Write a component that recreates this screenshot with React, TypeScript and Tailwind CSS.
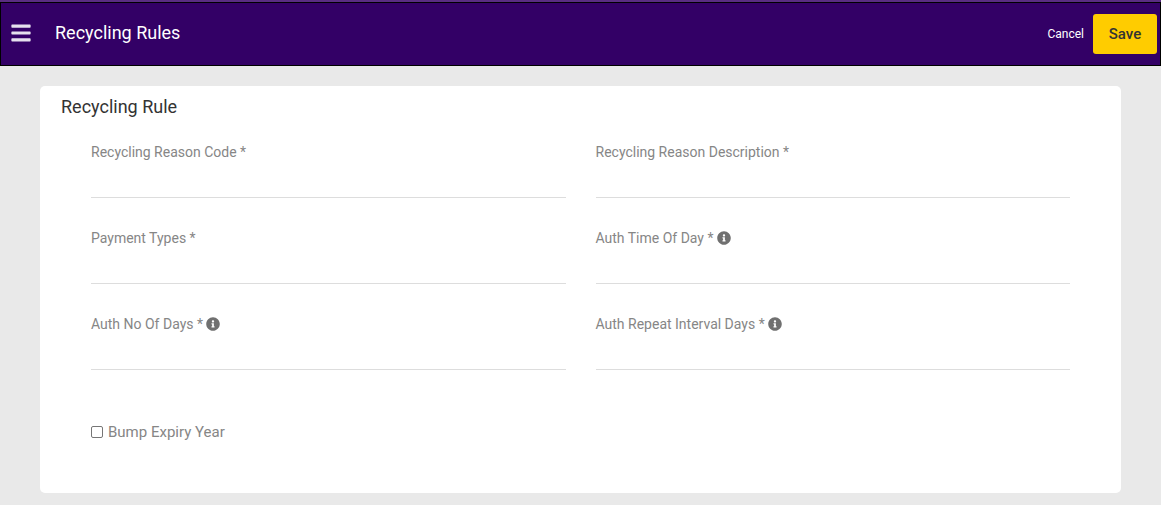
import { FaBars, FaInfoCircle } from "react-icons/fa";

const FIELDS = [
  { label: "Recycling Reason Code *", info: false },
  { label: "Recycling Reason Description *", info: false },
  { label: "Payment Types *", info: false },
  { label: "Auth Time Of Day *", info: true },
  { label: "Auth No Of Days *", info: true },
  { label: "Auth Repeat Interval Days *", info: true },
];

export default function App() {
  return (
    <div className="h-[505px] overflow-hidden bg-[#e9e9e9] font-['Roboto',sans-serif]">
      <div className="h-[2px] bg-[#5a2d82]" />
      <header className="flex h-[64px] items-center border border-black bg-[#330066] pl-[10px] pr-[3px]">
        <FaBars className="mb-[2px] h-[22px] w-[20px] text-[#e6e0ee]" />
        <h1 className="mb-[4px] ml-[24px] text-[18px] font-normal text-white">Recycling Rules</h1>
        <div className="ml-auto flex items-center gap-[9px]">
          <button type="button" className="text-[12px] text-white">
            Cancel
          </button>
          <button
            type="button"
            className="h-[40px] w-[64px] rounded-[3px] bg-[#ffcc00] text-[15px] font-medium text-[#333333]"
          >
            Save
          </button>
        </div>
      </header>
      <main className="mx-[40px] mt-[20px] h-[407px] rounded-[5px] bg-white pl-[21px] pr-[51px]">
        <h2 className="pt-[10px] text-[18px] leading-[22px] text-[#333333]">Recycling Rule</h2>
        <div className="mt-[24px] grid grid-cols-2 gap-x-[30px] gap-y-[30px] pl-[30px]">
          {FIELDS.map((f) => (
            <div key={f.label} className="h-[56px] border-b border-[#dddddd]">
              <label className="flex h-[20px] items-center gap-[3px] text-[14px] text-[#868686]">
                {f.label}
                {f.info ? <FaInfoCircle className="h-[14px] w-[14px] text-[#707070]" /> : null}
              </label>
            </div>
          ))}
        </div>
        <label className="ml-[30px] mt-[51px] flex items-center gap-[5px] text-[15px] text-[#868686]">
          <input
            type="checkbox"
            className="h-[12px] w-[12px] appearance-none rounded-[2px] border border-[#767676] bg-white"
          />
          Bump Expiry Year
        </label>
      </main>
    </div>
  );
}
